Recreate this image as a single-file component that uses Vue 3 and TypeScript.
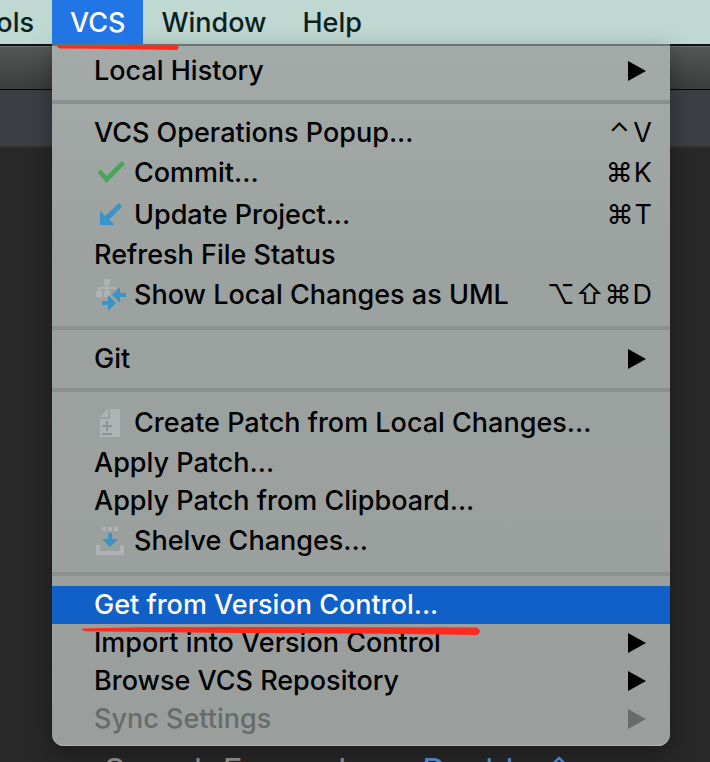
<script setup lang="ts">
type IconName = 'check' | 'update' | 'uml' | 'patch' | 'shelve'

interface MenuEntry {
  label: string
  icon?: IconName
  keys?: string[]
  submenu?: boolean
  disabled?: boolean
  active?: boolean
}

const bar = ['Tools', 'VCS', 'Window', 'Help']

const groups: MenuEntry[][] = [
  [{ label: 'Local History', submenu: true }],
  [
    { label: 'VCS Operations Popup...', keys: ['⌃', 'V'] },
    { label: 'Commit...', icon: 'check', keys: ['⌘', 'K'] },
    { label: 'Update Project...', icon: 'update', keys: ['⌘', 'T'] },
    { label: 'Refresh File Status' },
    { label: 'Show Local Changes as UML', icon: 'uml', keys: ['⌥', '⇧', '⌘', 'D'] },
  ],
  [{ label: 'Git', submenu: true }],
  [
    { label: 'Create Patch from Local Changes...', icon: 'patch' },
    { label: 'Apply Patch...' },
    { label: 'Apply Patch from Clipboard...' },
    { label: 'Shelve Changes...', icon: 'shelve' },
  ],
  [
    { label: 'Get from Version Control...', active: true },
    { label: 'Import into Version Control', submenu: true },
    { label: 'Browse VCS Repository', submenu: true },
    { label: 'Sync Settings', submenu: true, disabled: true },
  ],
]
</script>

<template>
  <div class="screen">
    <nav class="menubar">
      <button
        v-for="name in bar"
        :key="name"
        type="button"
        class="bar-item"
        :class="{ open: name === 'VCS', clipped: name === 'Tools' }"
      >
        {{ name }}
        <svg v-if="name === 'VCS'" class="mark mark-bar" viewBox="0 0 124 8" aria-hidden="true">
          <path d="M1 1.5 L60 1 L121 0.8 Q124 3 121 6 L90 5.6 L40 4.8 L4 4.400 Q0 3 1 1.5Z" fill="#fd2c1e" />
        </svg>
      </button>
    </nav>

    <div class="toolbar"></div>
    <div class="tabs"></div>
    <main class="editor">
      <p class="hint"><span>Search Everywhere</span><kbd>Double ⇧</kbd></p>
    </main>

    <div class="menu" role="menu">
      <template v-for="(group, g) in groups" :key="g">
        <hr v-if="g > 0" class="sep" />
        <button
          v-for="item in group"
          :key="item.label"
          type="button"
          role="menuitem"
          class="row"
          :class="{ tall: item.icon, active: item.active }"
          :disabled="item.disabled"
        >
          <svg v-if="item.icon" class="icon" viewBox="0 0 32 32" aria-hidden="true">
            <path v-if="item.icon === 'check'" d="M3.700 15.500 L6.700 12.500 L12.500 19 L27.700 4 L31 7.200 L12.500 26Z" fill="#4ba35c" />
            <path v-else-if="item.icon === 'update'" d="M6 11.500 V26 H20.500 L15.300 20.800 L28 7.500 L25 4 L11.300 17Z" fill="#3a94c9" />
            <g v-else-if="item.icon === 'uml'">
              <path d="M10 0h6v6h-2v2h8v2h-8v2h2v6h-6v-6h2v-2H6v2h2v6H2v-6h2V8h8V6h-2z" fill="#b0b3b5" />
              <path d="M32 14v4h-6v6L18 16l8-8v6z" fill="#3a94c9" />
              <path d="M8 22v4h6v6l8-8-8-8v6z" fill="#3a94c9" />
            </g>
            <g v-else-if="item.icon === 'patch'">
              <path d="M16 2h10v28H6V12h10z M14 2v8H6z" fill="#b0b3b5" />
              <path d="M8 19h10 M13 14v10 M8 27h10" fill="none" stroke="#8e9394" stroke-width="2" />
            </g>
            <g v-else>
              <path d="M8 2h4v4H8z M14 2h4v4h-4z M20 2h4v4h-4z M2 20h4v6h20v-6h4v10H2z" fill="#b0b3b5" />
              <path d="M14 8h4v6h6l-8 8-8-8h6z" fill="#3a94c9" />
            </g>
          </svg>
          <span class="label">{{ item.label }}</span>
          <span v-if="item.keys" class="keys"><kbd v-for="k in item.keys" :key="k" :class="{ modifier: k > 'Z' }">{{ k }}</kbd></span>
          <svg v-if="item.submenu" class="arrow" viewBox="0 0 18 20" aria-hidden="true">
            <path d="M0 0 L18 10 L0 20Z" fill="currentColor" />
          </svg>
          <svg v-if="item.active" class="mark mark-row" viewBox="0 0 400 10" aria-hidden="true">
            <path d="M1 2.500 L60 1.200 L200 1 L396 1.500 Q402 5 396 9 L300 7.800 L160 7 L60 6 L4 5.200 Q0 4 1 2.500Z" fill="#fd2c1e" />
          </svg>
        </button>
      </template>
    </div>
  </div>
</template>

<style>
body {
  background: #282828;
}
</style>

<style scoped>
.screen {
  position: relative;
  display: flex;
  flex-direction: column;
  height: 100vh;
  overflow: hidden;
  font-family: Inter, "Liberation Sans", sans-serif;
  font-size: 27px;
  font-weight: 450;
  color: #000;
}
button {
  margin: 0;
  border: 0;
  background: none;
  font: inherit;
  color: inherit;
}
kbd {
  font: inherit;
}
.menubar {
  display: flex;
  flex: none;
  height: 44px;
  background: #bfd8d1;
  border-bottom: 2px solid #0d1110;
  color: #0c211e;
}
.bar-item {
  position: relative;
  padding: 0 18px;
  white-space: nowrap;
}
.bar-item.clipped {
  display: flex;
  justify-content: flex-end;
  align-items: center;
  width: 52px;
}
.bar-item.open {
  z-index: 2;
  background: #2175e4;
  color: #fff;
}
.toolbar {
  flex: none;
  height: 44px;
  border-top: 1px solid #6d7270;
  border-bottom: 1px solid #050505;
  background: linear-gradient(#535755, #393d3b);
  box-sizing: border-box;
}
.tabs {
  flex: none;
  height: 56px;
  border-bottom: 2px solid #323232;
  background: #3b3f43;
}
.editor {
  flex: 1;
  background: #282828;
}
.hint {
  display: flex;
  gap: 14px;
  margin: 0;
  padding: 602px 0 0 104px;
  font-size: 33px;
  font-weight: 400;
  color: #959595;
  white-space: nowrap;
}
.hint kbd {
  color: #5893e6;
}
.menu {
  position: absolute;
  top: 44px;
  left: 52px;
  right: 40px;
  padding: 6px 0 8px;
  border-top: 2px solid #6c7371;
  border-radius: 0 0 12px 12px;
  background: linear-gradient(#a4aaa8, #9ca2a0 30%, #9a9f9d);
  box-shadow: 0 8px 24px rgba(0, 0, 0, 0.35), inset 0 -1px 0 #b0b5b3;
}
.row {
  position: relative;
  display: flex;
  align-items: center;
  width: 100%;
  height: 38px;
  padding: 0 18px 0 42px;
  text-align: left;
  white-space: nowrap;
}
.row.tall {
  height: 42px;
}
.row.active {
  z-index: 1;
  background: #1160c7;
  color: #fff;
}
.row:disabled {
  color: #676c6a;
}
.icon {
  width: 32px;
  height: 32px;
  margin-right: 8px;
}
.label {
  flex: 1;
  padding-bottom: 2px;
}
.keys {
  display: flex;
  gap: 1px;
  padding-bottom: 2px;
  font-weight: 400;
}
.modifier {
  min-width: 26px;
  text-align: center;
}
.arrow {
  width: 18px;
  height: 20px;
  margin-right: 6px;
}
.sep {
  height: 4px;
  margin: 10px 0;
  border: 0;
  background: #8c9190;
}
.mark {
  position: absolute;
  pointer-events: none;
}
.mark-bar {
  top: 44px;
  left: 4px;
  width: 124px;
  height: 8px;
}
.mark-row {
  top: 40px;
  left: 29px;
  width: 400px;
  height: 10px;
}
</style>
